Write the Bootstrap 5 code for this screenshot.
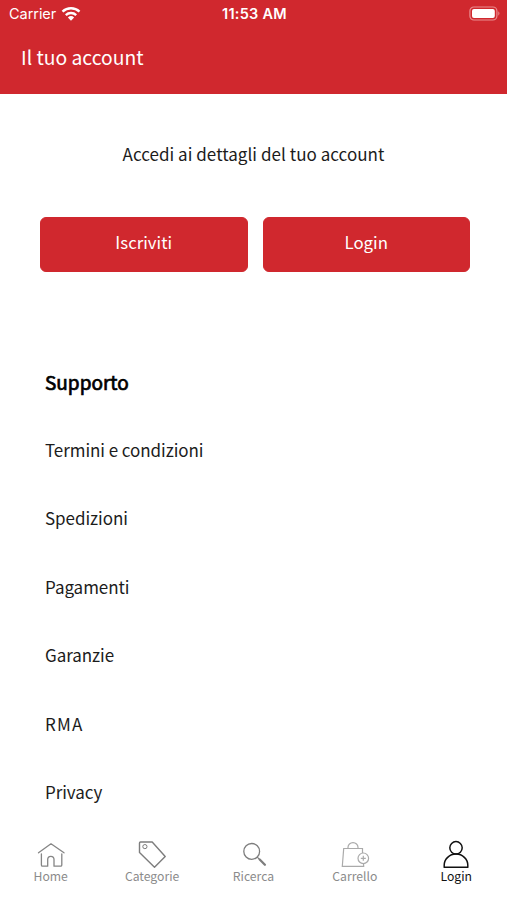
<!DOCTYPE html>
<html lang="it">
<head>
<meta charset="utf-8">
<meta name="viewport" content="width=device-width, initial-scale=1">
<title>Il tuo account</title>
<link href="https://cdn.jsdelivr.net/npm/bootstrap@5.3.0/dist/css/bootstrap.min.css" rel="stylesheet">
<style>
body{font-family:"Noto Sans CJK SC","Noto Sans",sans-serif;font-size:17px;color:#1c1c1c}
.screen{height:900px}
.topbar{height:94px;background:#d0282e}
.status{height:28px;font:14.5px/28px Inter,sans-serif;padding:0 6px 0 9px}
.carrier{letter-spacing:-.05px}
.status-time{font-weight:600;font-size:14.5px;letter-spacing:.25px;margin-right:1px}
.page-title{font-size:19.3px;line-height:28px;padding:15px 21px 0;font-weight:400}
.intro{line-height:26px;padding-top:47px;letter-spacing:.04px}
.actions{padding:50px 37px 0 40px;gap:15px}
.btn-red{--bs-btn-color:#fff;--bs-btn-bg:#d0282e;--bs-btn-border-color:#d0282e;--bs-btn-hover-color:#fff;--bs-btn-hover-bg:#b82127;height:55px;border-radius:6px;font-size:16.8px;padding:0 12px 3px}
.support{padding:93px 45px 0}
.support h2{font-size:19px;line-height:34px;margin:0;color:#000;font-weight:400;-webkit-text-stroke:.7px #000}
.support a{display:block;line-height:26px;color:#1c1c1c;text-decoration:none;margin-top:42.4px;letter-spacing:-.06px}
.support h2 + a{margin-top:38px}
.support .caps{letter-spacing:1.2px}
.tabbar{height:66px}
.tabbar a{font-size:12.2px;line-height:16px;color:#8b8b8b;text-decoration:none;width:20%}
.tabbar a.active{color:#111}
.tabbar svg{display:block;margin:0 auto;width:32px;height:34px}
</style>
</head>
<body>
<div class="screen d-flex flex-column overflow-hidden bg-white">
<header class="topbar text-white">
  <div class="status d-flex justify-content-between align-items-center">
    <div class="d-flex align-items-center col-4"><span class="carrier">Carrier</span>
      <svg class="ms-1" width="22" height="18" viewBox="0 0 22 18" fill="none" stroke="#fff" stroke-width="2.4"><path d="M2.5 6.7a12.3 12.3 0 0 1 17 0M5.8 10.1a7.6 7.6 0 0 1 10.4 0"/><path d="M11 15.7 7.9 12.5a4.5 4.5 0 0 1 6.2 0z" fill="#fff" stroke="none"/></svg>
    </div>
    <span class="status-time">11:53 AM</span>
    <div class="col-4 text-end d-flex justify-content-end">
      <svg width="32" height="16" viewBox="0 0 32 16"><rect x=".9" y="1" width="27" height="13" rx="4" fill="none" stroke="#e98d90" stroke-width="1.2"/><rect x="3" y="3" width="22.800" height="9" rx="2" fill="#fff"/><path d="M29.3 5.3q2.3 2.2 0 4.4z" fill="#e98d90"/></svg>
    </div>
  </div>
  <h1 class="page-title m-0">Il tuo account</h1>
</header>
<main class="flex-grow-1">
  <p class="intro text-center mb-0">Accedi ai dettagli del tuo account</p>
  <div class="actions d-flex">
    <button class="btn btn-red flex-fill w-50">Iscriviti</button>
    <button class="btn btn-red flex-fill w-50">Login</button>
  </div>
  <section class="support">
    <h2>Supporto</h2>
    <a href="#">Termini e condizioni</a>
    <a href="#">Spedizioni</a>
    <a href="#">Pagamenti</a>
    <a href="#">Garanzie</a>
    <a href="#" class="caps">RMA</a>
    <a href="#">Privacy</a>
  </section>
</main>
<nav class="tabbar d-flex text-center">
  <a href="#"><svg viewBox="0 0 32 34" fill="none" stroke="#858585" stroke-width="1.3" stroke-linejoin="round" stroke-linecap="round"><path d="M3.500 18.800 16 9.800l13 9M6.400 20v11c0 .8.3 1.200 1.100 1.200h5.200V25.500a3 3 0 0 1 6.300 0v6.700H25.600c.8 0 1.200-.4 1.200-1.200V20"/></svg>Home</a>
  <a href="#"><svg viewBox="0 0 32 34" fill="none" stroke="#7d7d7d" stroke-width="1.400" stroke-linejoin="round"><path d="M4.500 8h11.700L29.200 22.500 18.500 33.300 3.500 18.600V9q0-1 1-1z"/><circle cx="8.900" cy="12.600" r="2.100" stroke-width="1"/></svg>Categorie</a>
  <a href="#"><svg viewBox="0 0 32 34" fill="none" stroke="#7d7d7d" stroke-linecap="round"><circle cx="14.700" cy="17.400" r="7.900" stroke-width="1.300"/><path d="m20.300 23.100 1.700 1.700" stroke-width="1.200"/><path d="m22.700 25.500 5.200 5.200" stroke-width="2.300"/></svg>Ricerca</a>
  <a href="#"><svg viewBox="0 0 32 34" fill="none" stroke="#aaa" stroke-width="1.200"><path d="M23.500 19v-4.500H4.700L3.300 32.300H24.700l-.2-2.700M9 14.300v-1.100a5 4.600 0 0 1 10 0v1.100"/><circle cx="24.300" cy="24.300" r="5.300"/><path d="M24.300 21.800v5M21.800 24.300h5"/></svg>Carrello</a>
  <a href="#" class="active"><svg viewBox="0 0 32 34" fill="none" stroke="#111" stroke-width="1.500" stroke-linejoin="round"><circle cx="16" cy="13.800" r="6.200"/><path d="M4.200 33.300v-2a11.800 11.200 0 0 1 23.600 0v2z"/></svg>Login</a>
</nav>
</div>
<script src="https://cdn.jsdelivr.net/npm/bootstrap@5.3.0/dist/js/bootstrap.bundle.min.js"></script>
</body>
</html>
